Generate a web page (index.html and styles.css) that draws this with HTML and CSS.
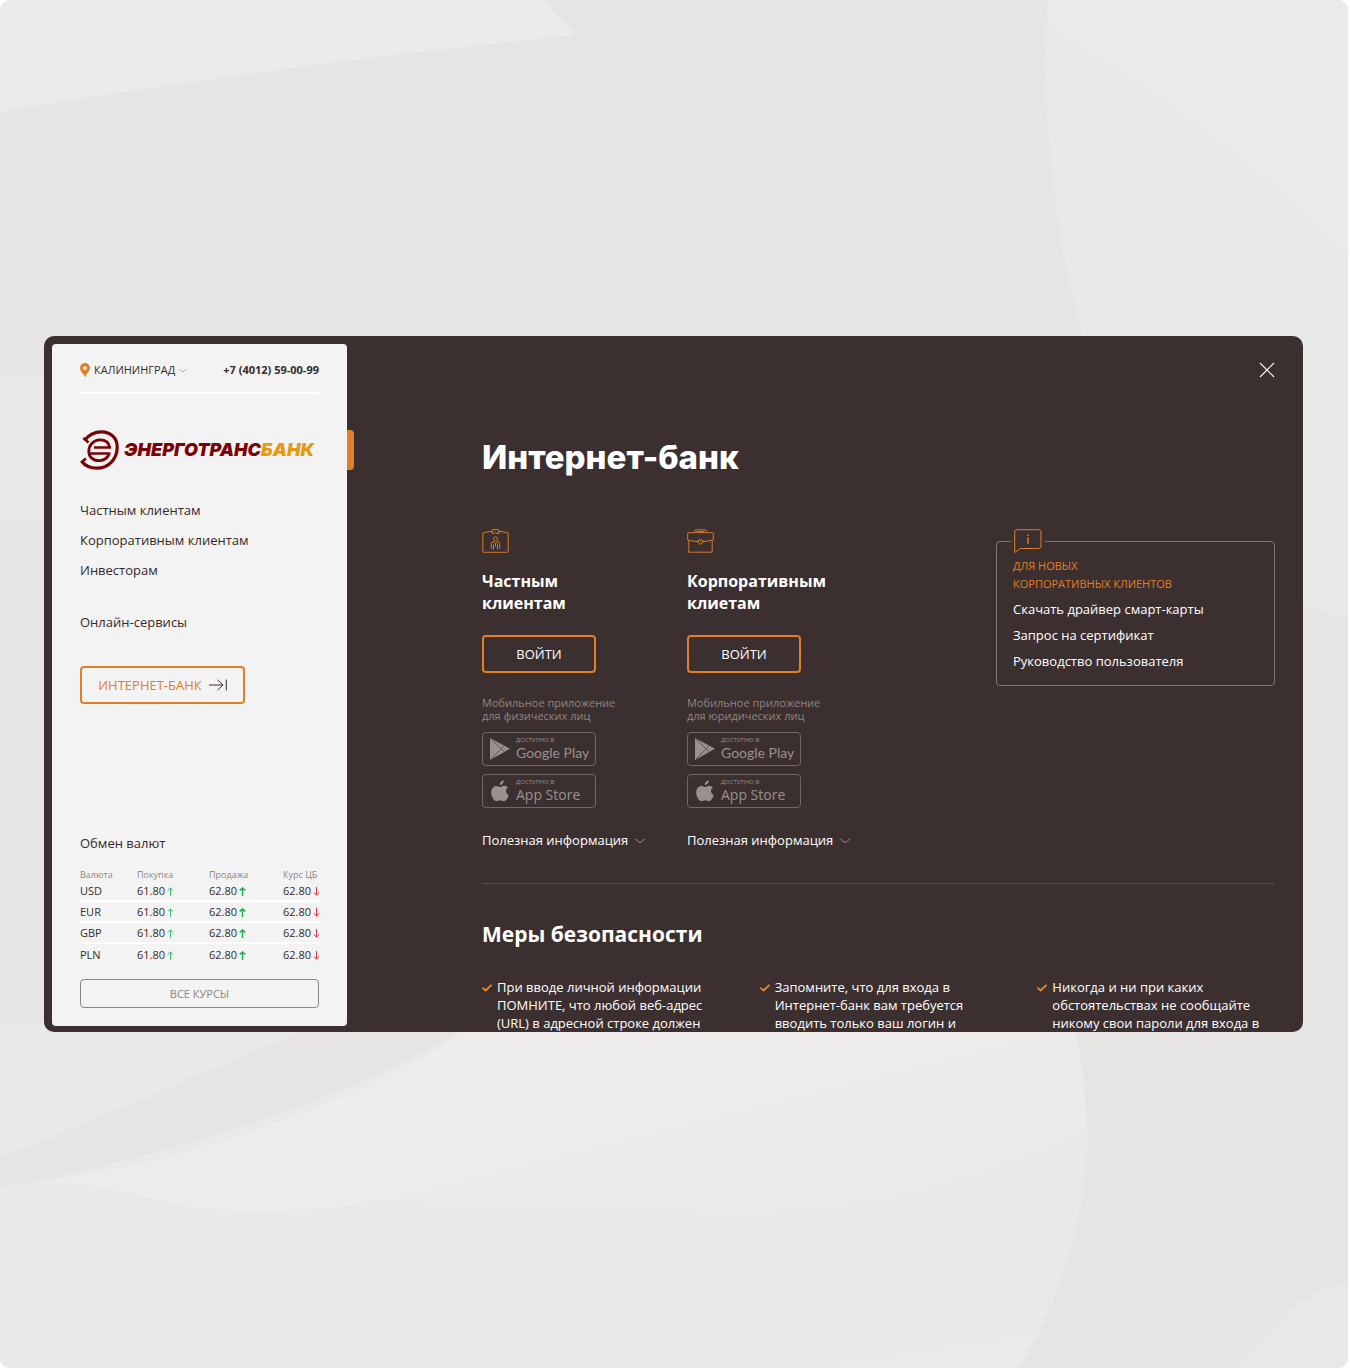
FILE: index.html
```html
<!DOCTYPE html>
<html lang="ru">
<head>
<meta charset="utf-8">
<meta name="viewport" content="width=device-width, initial-scale=1">
<title>Интернет-банк — Энерготрансбанк</title>
<link rel="stylesheet" href="styles.css">
</head>
<body>
<svg class="defs" width="0" height="0" aria-hidden="true">
  <symbol id="chevron" viewBox="0 0 12 7"><path d="M1 1.5Q4 5.3 6 5.3T11 1.5" fill="none" stroke="currentColor"/></symbol>
  <symbol id="up" viewBox="0 0 7 9"><path d="M3.5 9V1M.7 3.6 3.5.9l2.8 2.7" fill="none" stroke="currentColor"/></symbol>
  <symbol id="down" viewBox="0 0 7 9"><path d="M3.5 0v8M.7 5.4l2.8 2.7 2.8-2.7" fill="none" stroke="currentColor"/></symbol>
  <symbol id="check" viewBox="0 0 10 8"><path d="M1 4.2 3.6 6.5 9 1.3" fill="none" stroke="currentColor" stroke-width="1.8" stroke-linecap="round" stroke-linejoin="round"/></symbol>
  <symbol id="play" viewBox="0 0 20 22"><path d="M0 0 20 10.7 0 22z" fill="currentColor"/><path d="M1 1 14.5 14M1 21 14.5 7.5" fill="none" stroke="#3c2f2f" stroke-width=".6"/></symbol>
  <symbol id="apple" viewBox="0 0 18 22"><path d="M12.7.2c.2 2.6-1.700 4.700-3.900 4.800C8.500 2.700 10.500.500 12.700.200zM17 7.600c-3 1.900-2.500 6.200.800 7.600-1 3-3 6-5 6-1.400 0-1.900-.900-3.600-.900s-2.300.900-3.600.900C3.100 21.200.2 16.500.2 12.400c0-4 2.500-6.500 5.100-6.500 1.700 0 2.700 1 4 1s2.300-1.100 4.200-1.100c1.400 0 2.700.700 3.500 1.800z" fill="currentColor"/></symbol>
</svg>
<div class="stage">
  <svg class="backdrop" viewBox="0 0 1348 1368" preserveAspectRatio="none" aria-hidden="true">
    <path d="M0 0H545L575 35Q270 66 0 112z" fill="#ecebe9"/>
    <path d="M1048 0H1348V620L1160 560Q1030 260 1048 0z" fill="#e9e9e7"/>
    <path d="M1052 30 1048 0H1348V252Q1200 110 1052 30z" fill="#ebeae8"/>
    <path d="M0 377H60V520H0z" fill="#e9e9e7"/>
    <path d="M0 1025H360L300 1032Q130 1105 0 1158z" fill="#e9e9e7"/>
    <path d="M0 1188Q300 1130 480 1020H1071Q1120 1190 1020 1368H0z" fill="#e9e9e7"/>
    <path d="M0 1188Q140 1170 240 1135Q380 1090 480 1020H1071Q1086 1070 1085 1128Q900 1215 720 1211Q520 1205 380 1200Q240 1225 140 1195Q60 1176 0 1188z" fill="#edecea"/>
    <path d="M380 1200 1060 1030H1074Q1086 1070 1085 1128Q900 1215 720 1211Q520 1205 380 1200z" fill="#ecebe9"/>
    <path d="M815 1368 1030 1335 1020 1368z" fill="#ebeae8"/>
    <path d="M1232 1368Q1290 1305 1320 1290L1348 1282V1368z" fill="#e8e8e6"/>
  </svg>
  <div class="panel">
    <aside class="sidebar">
      <div class="topbar">
        <button class="city" type="button">
          <svg class="pin" viewBox="0 0 10 14"><path d="M5 0a5 5 0 0 1 5 5C10 8 7 10 5 14 3 10 0 8 0 5a5 5 0 0 1 5-5zM5 3.200a1.900 1.900 0 1 0 0 3.800 1.900 1.900 0 0 0 0-3.800z" fill="#e17f26" fill-rule="evenodd"/></svg>
          КАЛИНИНГРАД
          <svg class="chev-small"><use href="#chevron"/></svg>
        </button>
        <a class="phone" href="tel:+74012590099">+7 (4012) 59-00-99</a>
      </div>
      <a class="logo" href="#">
        <svg class="logo-mark" viewBox="0 0 40 40" fill="none" stroke="#7b0306" stroke-width="3.200">
          <path d="M5 10Q11 1.800 21.500 1.800C31 1.800 37.200 8.500 37.200 17 37.200 29 28.500 38.200 17 38.200Q7 38.200 1.800 31.500"/>
          <path d="M3.300 8 8.500 12.500M1 32.500 6 28.500" stroke-width="2.600"/>
          <path d="M29 24.500C27 28.500 23.500 30.600 19 30.600 13 30.600 8.800 27 8.800 21.500 8.800 15 13.500 9.900 20 9.900 25.500 9.900 29 12.500 29.500 17.300" stroke-width="2.800"/>
          <path d="M14 17.500H31M8 23.500H30.500" stroke-width="2.600"/>
        </svg>
        <span class="logo-text">ЭНЕРГОТРАНС<span class="logo-accent">БАНК</span></span>
      </a>
      <nav>
        <ul class="menu">
          <li><a href="#">Частным клиентам</a></li>
          <li><a href="#">Корпоративным клиентам</a></li>
          <li><a href="#">Инвесторам</a></li>
          <li class="menu-apart"><a href="#">Онлайн-сервисы</a></li>
        </ul>
      </nav>
      <button class="bank-button" type="button">ИНТЕРНЕТ-БАНК
        <svg class="bank-arrow" viewBox="0 0 18 12"><path d="M0 6H14M8.500.800 14 6 8.500 11.200M17.300.500V11.500" fill="none" stroke="#3c2f2f"/></svg>
      </button>
      <section class="rates">
        <h2 class="rates-title">Обмен валют</h2>
        <table class="rates-table">
          <thead><tr><th>Валюта</th><th>Покупка</th><th>Продажа</th><th>Курс ЦБ</th></tr></thead>
          <tbody>
            <tr><td>USD</td><td>61.80<svg class="arrow up"><use href="#up"/></svg></td><td>62.80<svg class="arrow up strong"><use href="#up"/></svg></td><td>62.80<svg class="arrow down"><use href="#down"/></svg></td></tr>
            <tr><td>EUR</td><td>61.80<svg class="arrow up"><use href="#up"/></svg></td><td>62.80<svg class="arrow up strong"><use href="#up"/></svg></td><td>62.80<svg class="arrow down"><use href="#down"/></svg></td></tr>
            <tr><td>GBP</td><td>61.80<svg class="arrow up"><use href="#up"/></svg></td><td>62.80<svg class="arrow up strong"><use href="#up"/></svg></td><td>62.80<svg class="arrow down"><use href="#down"/></svg></td></tr>
            <tr><td>PLN</td><td>61.80<svg class="arrow up"><use href="#up"/></svg></td><td>62.80<svg class="arrow up strong"><use href="#up"/></svg></td><td>62.80<svg class="arrow down"><use href="#down"/></svg></td></tr>
          </tbody>
        </table>
        <button class="all-rates" type="button">ВСЕ КУРСЫ</button>
      </section>
    </aside>
    <main class="main">
      <button class="close" type="button" aria-label="Закрыть"><svg viewBox="0 0 16 16"><path d="M1 1 15 15M15 1 1 15" stroke="#fff" stroke-width="1.100"/></svg></button>
      <h1 class="title">Интернет-банк</h1>
      <div class="services">
        <section class="service">
          <svg class="service-icon" viewBox="0 0 27 24" fill="none" stroke="#d67a27"><path d="M10 2.500H8L.8 4V22.500Q.8 23.300 1.600 23.300H25.400Q26.200 23.300 26.200 22.500V4L19 2.500H17"/><path d="M10.200.6H16.800V4.400H15L13.500 3.200 12 4.400H10.200z"/><circle cx="13.500" cy="9.800" r="2"/><path d="M9.300 20V14.500Q9.300 13 11 12.600L13.500 14.700 16 12.600Q17.700 13 17.700 14.500V20M11.500 15.500V20.500M15.500 15.500V20.500M13.500 14.700V17.500"/></svg>
          <h2 class="service-title">Частным<br>клиентам</h2>
          <button class="login" type="button">ВОЙТИ</button>
          <p class="note">Мобильное приложение<br>для физических лиц</p>
          <div class="stores">
            <a class="store" href="#"><svg class="store-icon"><use href="#play"/></svg><span class="store-text"><small>ДОСТУПНО В</small><span class="google">Google Play</span></span></a>
            <a class="store" href="#"><svg class="store-icon"><use href="#apple"/></svg><span class="store-text"><small>ДОСТУПНО В</small><span class="appstore">App Store</span></span></a>
          </div>
          <button class="more" type="button">Полезная информация <svg class="chev"><use href="#chevron"/></svg></button>
        </section>
        <section class="service">
          <svg class="service-icon" viewBox="0 0 27 24" fill="none" stroke="#d67a27"><path d="M7.500 3.500V2.500Q7.500.8 9.200.8H17.800Q19.500.8 19.500 2.500V3.500M10 3.500V2.500H17V3.500M1.300 3.700H25.700Q26.300 3.700 26.300 4.300V11Q20 12.500 15.800 12.600M11.200 12.600Q7 12.500.7 11V4.300Q.7 3.700 1.300 3.700M1.800 11.500V23.200H25.200V11.500M11.200 11H15.800V13.500L13.500 15.500 11.200 13.500zM13.500 12.500V13.500"/></svg>
          <h2 class="service-title">Корпоративным<br>клиетам</h2>
          <button class="login" type="button">ВОЙТИ</button>
          <p class="note">Мобильное приложение<br>для юридических лиц</p>
          <div class="stores">
            <a class="store" href="#"><svg class="store-icon"><use href="#play"/></svg><span class="store-text"><small>ДОСТУПНО В</small><span class="google">Google Play</span></span></a>
            <a class="store" href="#"><svg class="store-icon"><use href="#apple"/></svg><span class="store-text"><small>ДОСТУПНО В</small><span class="appstore">App Store</span></span></a>
          </div>
          <button class="more" type="button">Полезная информация <svg class="chev"><use href="#chevron"/></svg></button>
        </section>
        <section class="info">
          <span class="info-badge"><svg viewBox="0 0 28 24" fill="none" stroke="#e17f26"><path d="M3 .7H24.500Q27 .7 27 3.200V17Q27 19.500 24.500 19.500H6.500L.7 23.500V3Q.7.7 3 .7z"/><path d="M14 8.500V15M14 5.500V7" stroke-width="1.400"/></svg></span>
          <h2 class="info-title">ДЛЯ НОВЫХ<br>КОРПОРАТИВНЫХ КЛИЕНТОВ</h2>
          <ul class="info-list">
            <li><a href="#">Скачать драйвер смарт-карты</a></li>
            <li><a href="#">Запрос на сертификат</a></li>
            <li><a href="#">Руководство пользователя</a></li>
          </ul>
        </section>
      </div>
      <section class="safety">
        <h2 class="safety-title">Меры безопасности</h2>
        <ul class="safety-list">
          <li><svg class="check"><use href="#check"/></svg><span>При вводе личной информации ПОМНИТЕ, что любой веб-адрес (URL) в адресной строке должен</span></li>
          <li><svg class="check"><use href="#check"/></svg><span>Запомните, что для входа в Интернет-банк вам требуется вводить только ваш логин и</span></li>
          <li><svg class="check"><use href="#check"/></svg><span>Никогда и ни при каких обстоятельствах не сообщайте никому свои пароли для входа в</span></li>
        </ul>
      </section>
    </main>
  </div>
</div>
</body>
</html>
```
FILE: styles.css
```css
* { box-sizing: border-box; }
body { margin: 0; background: #fff; font-family: "Open Sans", "Noto Sans", sans-serif; font-size: 13px; line-height: 20px; color: #352a2a; }
h1, h2, p, ul { margin: 0; padding: 0; }
ul { list-style: none; }
a { color: inherit; text-decoration: none; }
button { font: inherit; color: inherit; background: none; border: 0; padding: 0; cursor: pointer; }
svg { display: block; flex: none; }
.defs { position: absolute; }

.stage { position: relative; display: flex; align-items: center; min-height: 100vh; margin-right: 2px; padding: 44px 45px 44px 44px; background: #e6e5e3; border-radius: 10px; overflow: hidden; }
.backdrop { position: absolute; inset: 0; width: 100%; height: 100%; }
.panel { position: relative; display: flex; flex: 1; background: #3c2f2f; border-radius: 10px; overflow: hidden; }

.sidebar { position: relative; display: flex; flex-direction: column; width: 295px; flex: none; margin: 8px 0 6px 8px; padding: 16px 28px 18px; background: #f3f3f3; border-radius: 4px; }
.sidebar::after { content: ""; position: absolute; left: 100%; top: 86px; width: 7px; height: 40px; background: #e17f26; border-radius: 0 4px 4px 0; }
.topbar { display: flex; justify-content: space-between; padding-bottom: 12px; border-bottom: 2px solid #fff; font-size: 11px; white-space: nowrap; }
.city { display: flex; align-items: center; gap: 4px; }
.pin { width: 10px; height: 14px; }
.chev-small { width: 8px; height: 5px; color: #8f8584; }
.phone { font-weight: 700; }
.logo { display: flex; align-items: center; gap: 4px; margin-top: 36px; }
.logo-mark { width: 40px; height: 40px; }
.logo-text { font-family: Inter, "Open Sans", sans-serif; font-size: 18px; font-weight: 900; font-style: italic; color: #7b0306; white-space: nowrap; }
.logo-accent { color: #e59a12; }
.menu { display: flex; flex-direction: column; gap: 10px; margin-top: 30px; }
.menu-apart { margin-top: 22px; }
.bank-button { display: flex; align-items: center; justify-content: center; gap: 7px; width: 165px; height: 38px; margin-top: 34px; border: 2px solid #e17f26; border-radius: 4px; color: #e17f26; white-space: nowrap; }
.bank-arrow { width: 18px; height: 12px; }

.rates { margin-top: auto; }
.rates-title { font-size: 13px; font-weight: 400; margin-bottom: 17px; }
.rates-table { width: 100%; border-collapse: collapse; table-layout: fixed; font-size: 11px; white-space: nowrap; }
.rates-table th, .rates-table td { padding: 0; text-align: left; }
.rates-table th { font-size: 9px; line-height: 10px; font-weight: 400; color: #8f8584; }
.rates-table th:nth-child(1) { width: 57px; }
.rates-table th:nth-child(2) { width: 72px; }
.rates-table th:nth-child(3) { width: 74px; }
.rates-table td { height: 21px; line-height: 19px; }
.rates-table tr + tr td { border-top: 2px solid #fff; }
.arrow { display: inline-block; width: 7px; height: 9px; margin-left: 2px; vertical-align: -1px; }
.up { color: #3fc06f; }
.strong { color: #16b04b; stroke-width: 1.4; }
.down { color: #e8323c; }
.all-rates { width: 100%; height: 29px; margin-top: 15px; border: 1px solid #8f8584; border-radius: 4px; font-size: 11px; color: #8f8584; }

.main { display: flex; flex-direction: column; flex: 1; min-width: 0; padding: 26px 28px 0 135px; color: #fff; }
.close { align-self: flex-end; width: 16px; height: 16px; }
.title { margin-top: 59px; font-family: Inter, "Open Sans", sans-serif; font-size: 33px; line-height: 40px; font-weight: 800; }
.services { display: flex; align-items: flex-start; margin-top: 52px; padding-bottom: 33px; border-bottom: 1px solid #5a4e4d; }
.service { display: flex; flex-direction: column; align-items: flex-start; width: 205px; }
.service-icon { width: 27px; height: 24px; }
.service-title { margin-top: 17px; font-size: 16px; line-height: 22px; }
.login { width: 114px; height: 38px; margin-top: 21px; border: 2px solid #e17f26; border-radius: 4px; }
.note { margin-top: 23px; font-size: 11px; line-height: 13px; color: #8f8584; }
.stores { display: flex; flex-direction: column; gap: 8px; margin-top: 10px; }
.store { display: flex; align-items: center; gap: 6px; width: 114px; height: 34px; padding-left: 7px; border: 1px solid #746867; border-radius: 4px; color: #9a908f; white-space: nowrap; }
.store-icon { width: 20px; height: 22px; }
.store-text { display: flex; flex-direction: column; }
.store small { font-size: 6px; line-height: 8px; }
.google { font-family: Lato, sans-serif; font-size: 14px; line-height: 18px; }
.appstore { font-size: 14px; line-height: 18px; }
.more { display: flex; align-items: center; gap: 6px; margin-top: 22px; white-space: nowrap; }
.chev { width: 12px; height: 7px; color: #9a908f; }

.info { position: relative; width: 279px; margin: 12px 0 0 auto; padding: 15px 16px 11px; border: 1px solid #827776; border-radius: 4px; }
.info-badge { position: absolute; left: 14px; top: -13px; padding: 0 3px; background: #3c2f2f; }
.info-badge svg { width: 28px; height: 24px; }
.info-title { font-size: 11px; line-height: 18px; font-weight: 400; color: #e17f26; }
.info-list { margin-top: 3px; line-height: 26px; }

.safety-title { margin-top: 35px; font-size: 21px; line-height: 30px; }
.safety-list { display: grid; grid-template-columns: repeat(3, 1fr); gap: 40px; margin-top: 29px; line-height: 18px; }
.safety-list li { display: flex; gap: 5px; }
.check { width: 10px; height: 8px; margin-top: 6px; color: #e88a2c; }
```
